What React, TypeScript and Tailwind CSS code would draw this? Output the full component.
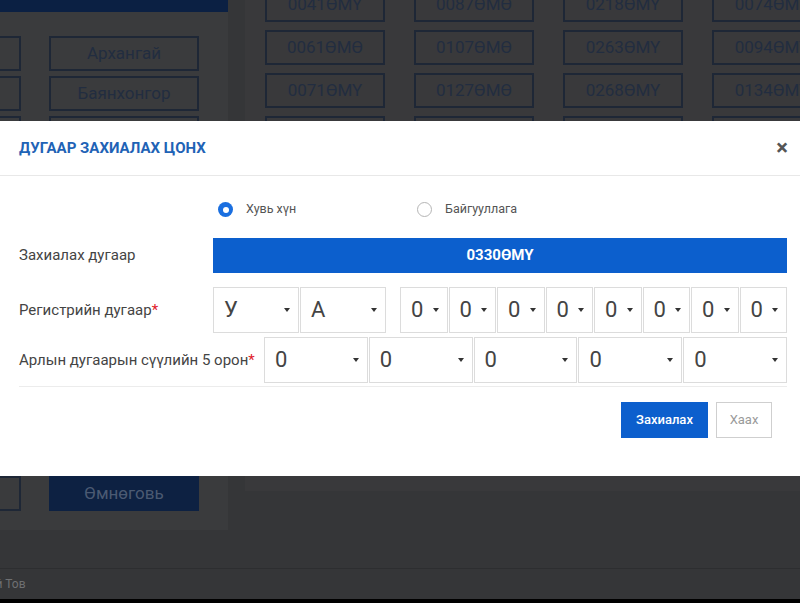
import React from "react";

const leftNames = [
  "Архангай",
  "Баянхонгор",
  "Булган",
  "Говь-Алтай",
  "Дорноговь",
  "Дундговь",
  "Завхан",
  "Сүхбаатар",
  "Сэлэнгэ",
  "Төв",
  "Увс",
  "Өмнөговь",
];
const leftPartial = [
  "Улаанбаатар",
  "Баян-Өлгий",
  "Дархан-Уул",
  "Дорнод",
  "Говьсүмбэр",
  "Орхон",
  "Өвөрхангай",
  "Хөвсгөл",
  "Хэнтий",
  "Ховд",
  "Баян",
  "Эрдэнэт",
];

const plates = [
  ["0041ӨМҮ", "0087ӨМӨ", "0218ӨМҮ", "0074ӨМҮ"],
  ["0061ӨМӨ", "0107ӨМӨ", "0263ӨМҮ", "0094ӨМҮ"],
  ["0071ӨМҮ", "0127ӨМӨ", "0268ӨМҮ", "0134ӨМҮ"],
  ["0081ӨМҮ", "0137ӨМӨ", "0278ӨМҮ", "0144ӨМҮ"],
  ["0091ӨМҮ", "0147ӨМӨ", "0288ӨМҮ", "0154ӨМҮ"],
  ["0101ӨМҮ", "0157ӨМӨ", "0298ӨМҮ", "0164ӨМҮ"],
  ["0111ӨМҮ", "0167ӨМӨ", "0308ӨМҮ", "0174ӨМҮ"],
  ["0121ӨМҮ", "0177ӨМӨ", "0318ӨМҮ", "0184ӨМҮ"],
  ["0131ӨМҮ", "0187ӨМӨ", "0328ӨМҮ", "0194ӨМҮ"],
  ["0141ӨМҮ", "0197ӨМӨ", "0338ӨМҮ", "0204ӨМҮ"],
  ["0151ӨМҮ", "0207ӨМӨ", "0348ӨМҮ", "0214ӨМҮ"],
];

function Caret() {
  return (
    <svg width="6" height="4" viewBox="0 0 6 4" className="shrink-0">
      <path d="M0 0 L6 0 L3 4 Z" fill="#333" />
    </svg>
  );
}

function Sel({ value, className }: { value: string; className: string }) {
  return (
    <div
      className={`flex items-center justify-between border border-[#dcdcdc] bg-white pl-[10px] pr-[8px] h-[46px] min-w-0 ${className}`}
    >
      <span className="text-[22px] text-[#444] leading-none">{value}</span>
      <Caret />
    </div>
  );
}

export default function App() {
  return (
    <div
      className="relative w-[800px] h-[603px] overflow-hidden bg-[#353638] flex flex-col"
      style={{ fontFamily: "Roboto, 'Noto Sans', sans-serif" }}
    >
      {/* background page */}
      <div className="flex h-[568px] shrink-0">
        <div className="w-[228px] h-[530px] bg-[#3a3b3d] flex flex-col overflow-hidden shrink-0">
          <div className="h-[12px] bg-[#0b2043]" />
          <div className="flex flex-col gap-[5px] mt-[24px] overflow-hidden">
            {leftNames.map((n, i) => {
              const last = i === leftNames.length - 1;
              return (
                <div key={n} className="flex gap-[28px] ml-[-129px] h-[35px] shrink-0">
                  <div className="w-[150px] h-[35px] border-2 border-[#1e2736] flex items-center justify-center text-[17px] text-[#222d40] shrink-0">
                    {leftPartial[i]}
                  </div>
                  <div
                    className={`w-[150px] h-[35px] flex items-center justify-center text-[17px] shrink-0 ${
                      last
                        ? "bg-[#0d2142] text-[#4b5a72]"
                        : "border-2 border-[#1e2736] text-[#222d40]"
                    }`}
                  >
                    {n}
                  </div>
                </div>
              );
            })}
          </div>
        </div>
        <div className="w-[17px] shrink-0" />
        <div className="flex-1 h-[491px] bg-[#39393b] overflow-hidden">
          <div className="flex flex-col gap-[8px] mt-[-13px] ml-[20px]">
            {plates.map((row, r) => (
              <div key={r} className="flex gap-[29px] shrink-0">
                {row.map((p) => (
                  <div
                    key={p}
                    className="w-[120px] h-[35px] shrink-0 border-2 border-[#1e2736] flex items-center justify-center text-[17px] text-[#222d40]"
                  >
                    {p}
                  </div>
                ))}
              </div>
            ))}
          </div>
        </div>
      </div>
      <div className="h-px bg-[#2d2e30]" />
      <div className="h-[30px] flex items-center text-[12px] text-[#6f7072]">
        <span className="ml-[-37px]">Хангай Тов</span>
      </div>
      <div className="flex-1 bg-black" />

      {/* modal */}
      <div className="absolute left-0 top-[121px] w-[800px] h-[355px] bg-white flex flex-col">
        <div className="h-[55px] shrink-0 flex items-center justify-between pl-[19px] pr-[12px] border-b border-[#e8e8e8]">
          <span className="text-[15px] font-bold text-[#1f63b6]">
            ДУГААР ЗАХИАЛАХ ЦОНХ
          </span>
          <span className="text-[22px] font-bold text-[#555] leading-none">×</span>
        </div>
        <div className="flex flex-col pl-[19px] pr-[13px]">
          {/* radios */}
          <div className="flex items-center mt-[26px] h-[15px] pl-[199px]">
            <div className="flex items-center w-[199px]">
              <span className="w-[15px] h-[15px] rounded-full bg-[#1a6fe0] flex items-center justify-center">
                <span className="w-[6px] h-[6px] rounded-full bg-white" />
              </span>
              <span className="ml-[13px] text-[12.5px] text-[#555]">Хувь хүн</span>
            </div>
            <div className="flex items-center">
              <span className="w-[15px] h-[15px] rounded-full border border-[#b5b5b5]" />
              <span className="ml-[13px] text-[12.5px] text-[#555]">Байгууллага</span>
            </div>
          </div>
          {/* order number */}
          <div className="flex items-center mt-[21px]">
            <span className="w-[194px] text-[15px] text-[#444]">Захиалах дугаар</span>
            <div className="flex-1 h-[35px] bg-[#0c5fcd] flex items-center justify-center text-[15px] font-bold text-white">
              0330ӨМҮ
            </div>
          </div>
          {/* register */}
          <div className="flex items-center mt-[14px]">
            <span className="w-[194px] text-[15px] text-[#444]">
              Регистрийн дугаар<span className="text-[#e0202a]">*</span>
            </span>
            <div className="flex gap-[1px]">
              <Sel value="У" className="w-[86px]" />
              <Sel value="А" className="w-[86px]" />
            </div>
            <div className="flex gap-[1px] ml-[14px] flex-1">
              {Array.from({ length: 8 }).map((_, i) => (
                <Sel key={i} value="0" className="flex-1" />
              ))}
            </div>
          </div>
          {/* last 5 */}
          <div className="flex items-center mt-[4px]">
            <span className="w-[245px] text-[15px] text-[#444] whitespace-nowrap">
              Арлын дугаарын сүүлийн 5 орон<span className="text-[#e0202a]">*</span>
            </span>
            <div className="flex gap-[1px] flex-1">
              {Array.from({ length: 5 }).map((_, i) => (
                <Sel key={i} value="0" className="flex-1" />
              ))}
            </div>
          </div>
          <div className="h-px bg-[#ececec] mt-[3px]" />
          <div className="flex justify-end gap-[8px] mt-[15px] pr-[15px]">
            <button className="w-[87px] h-[36px] bg-[#0c5fcd] text-white text-[13px] font-medium">
              Захиалах
            </button>
            <button className="w-[56px] h-[36px] border border-[#cfcfcf] bg-white text-[#9a9a9a] text-[13px]">
              Хаах
            </button>
          </div>
        </div>
      </div>
    </div>
  );
}
